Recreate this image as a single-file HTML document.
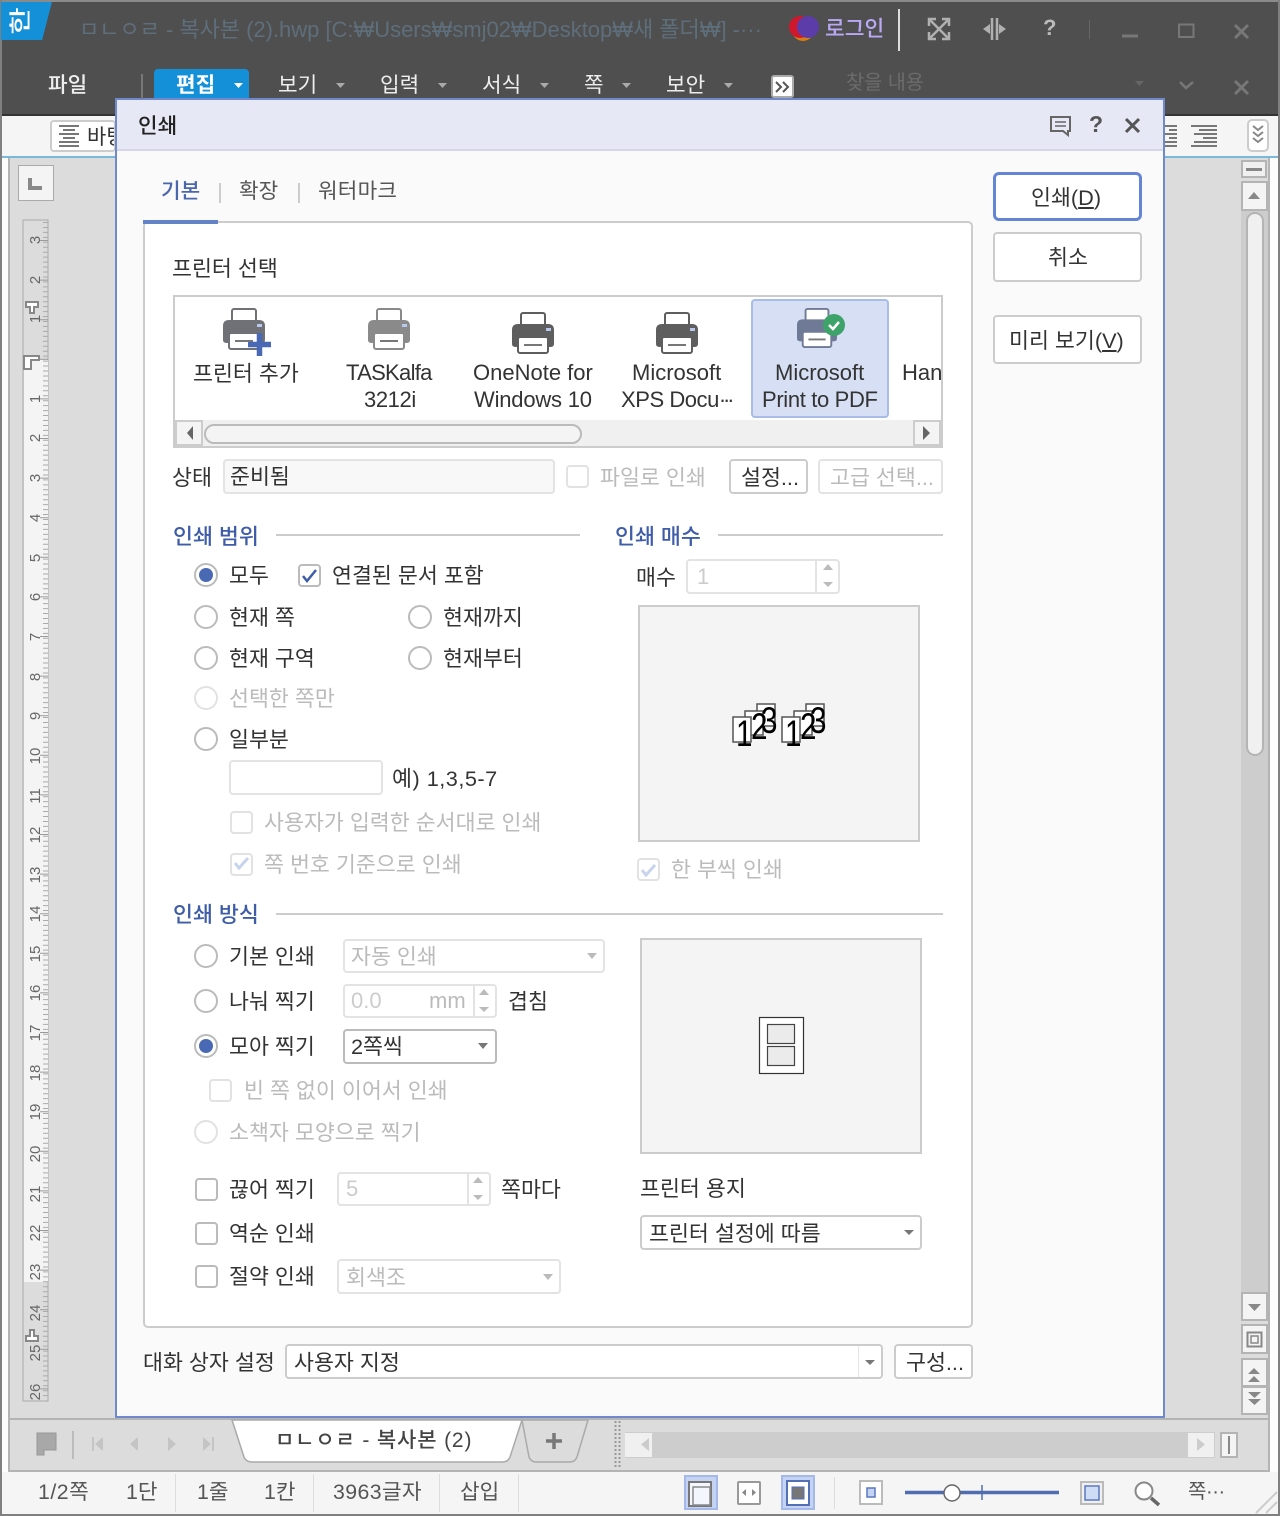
<!DOCTYPE html>
<html lang="ko"><head><meta charset="utf-8"><title>인쇄</title>
<style>
html,body{margin:0;padding:0;background:#fff}
#p{position:relative;width:1280px;height:1516px;overflow:hidden;background:#dcdcdc;font-family:"Liberation Sans","Noto Sans CJK KR",sans-serif;font-size:21.7px;color:#333}
#p div,#p span.t{position:absolute;box-sizing:border-box}
.t{white-space:nowrap;line-height:0;z-index:5;color:#333;margin-top:4px}
#p span.n{margin-top:0;font-size:22px}
.d{color:#bbb}
.h{color:#3f5ca8;font-weight:500}
.w{background:#fff;border:2px solid #ccc;border-radius:4px}
.x{background:#fafafa;border:2px solid #e3e3e3;border-radius:4px}
.r{width:24px;height:24px;border-radius:50%;border:2px solid #bbb;background:#fff}
.rd{border-color:#e2e2e2}
.rs:after{content:"";position:absolute;left:3px;top:3px;width:14px;height:14px;border-radius:50%;background:#4a69b4}
.c{width:23px;height:23px;border-radius:4px;border:2px solid #bbb;background:#fff}
.cd{border-color:#e2e2e2}
.l{background:#ccc;height:2px}
#o{position:absolute;left:0;top:0;z-index:2}
</style></head><body><div id="p">

<!-- window chrome -->
<div style="left:0;top:0;width:1280px;height:116px;background:#4f4f4f"></div>
<div style="left:0;top:0;width:1280px;height:2px;background:#8a8a8a"></div>
<div style="left:0;top:114px;width:1280px;height:2px;background:#333"></div>
<div style="left:0;top:116px;width:1280px;height:40px;background:#f5f5f5"></div>
<div style="left:0;top:156px;width:1280px;height:2px;background:#7db8dc"></div>
<div style="left:0;top:0;width:2px;height:1516px;background:#808080"></div>
<div style="left:1278px;top:0;width:2px;height:1516px;background:#808080"></div>
<div style="left:2px;top:158px;width:6px;height:1314px;background:#fdfdfd"></div>
<div style="left:8px;top:158px;width:2px;height:1314px;background:#b4b4b4"></div>
<div style="left:1270px;top:158px;width:8px;height:1314px;background:#fdfdfd"></div>
<div style="left:1268px;top:158px;width:2px;height:1314px;background:#b4b4b4"></div>

<span class="t" style="left:11px;top:17px;color:#fff;font-size:22px;transform:rotate(-90deg) scaleX(1.35);font-weight:500">한</span>
<span class="t" style="left:79px;top:26px;color:#5e6e7b;font-size:22px;letter-spacing:-.02px">ㅁㄴㅇㄹ - 복사본 (2).hwp [C:₩Users₩smj02₩Desktop₩새 폴더₩] -···</span>
<span class="t" style="left:825px;top:25px;color:#bba8f5;font-size:21.5px;font-weight:500">로그인</span>
<span class="t n" style="left:1043px;top:28px;color:#bbb;font-weight:700">?</span>

<span class="t" style="left:48px;top:81px;color:#eee;font-size:21.3px;font-weight:500">파일</span>
<div style="left:154px;top:69px;width:95px;height:30px;background:#1490d8;border-radius:4px 4px 0 0"></div>
<span class="t" style="left:176px;top:81px;color:#fff;font-size:21.3px;font-weight:700">편집</span>
<span class="t" style="left:278px;top:81px;color:#eee;font-size:21.3px">보기</span>
<span class="t" style="left:380px;top:81px;color:#eee;font-size:21.3px">입력</span>
<span class="t" style="left:482px;top:81px;color:#eee;font-size:21.3px">서식</span>
<span class="t" style="left:584px;top:81px;color:#eee;font-size:21.3px">쪽</span>
<span class="t" style="left:666px;top:81px;color:#eee;font-size:21.3px">보안</span>
<span class="t" style="left:846px;top:79px;color:#6c6c6c;font-size:19.7px">찾을 내용</span>
<div style="left:771px;top:75px;width:23px;height:23px;background:#fff;border:2px solid #aaa;border-radius:3px"></div>

<div style="left:50px;top:120px;width:66px;height:32px;background:#fff;border:2px solid #ccc;border-radius:4px;overflow:hidden"><span class="t" style="left:35px;top:12px;font-size:21px">바탕</span></div>
<div style="left:1247px;top:119px;width:22px;height:33px;background:#fff;border:2px solid #ccc;border-radius:5px"></div>

<!-- left ruler -->
<div style="left:18px;top:165px;width:36px;height:36px;background:#f4f4f4;border:1px solid #aaa"></div>

<!-- right scrollbar -->
<div style="left:1241px;top:160px;width:26px;height:18px;background:#f0f0f0;border:2px solid #b4b4b4"></div>
<div style="left:1241px;top:181px;width:27px;height:1135px;background:#cdcdcd"></div>
<div style="left:1241px;top:181px;width:27px;height:30px;background:#f4f4f4;border:2px solid #b4b4b4"></div>
<div style="left:1246px;top:212px;width:18px;height:544px;background:#f0f0f0;border:2px solid #b4b4b4;border-radius:9px"></div>
<div style="left:1241px;top:1292px;width:27px;height:29px;background:#f4f4f4;border:2px solid #b4b4b4"></div>
<div style="left:1241px;top:1324px;width:27px;height:30px;background:#f4f4f4;border:2px solid #b4b4b4"></div>
<div style="left:1241px;top:1358px;width:27px;height:29px;background:#f4f4f4;border:2px solid #b4b4b4"></div>
<div style="left:1241px;top:1386px;width:27px;height:29px;background:#f4f4f4;border:2px solid #b4b4b4"></div>

<!-- tab bar -->
<div style="left:8px;top:1418px;width:1262px;height:2px;background:#b4b4b4"></div>
<div style="left:8px;top:1470px;width:1262px;height:2px;background:#b4b4b4"></div>
<div style="left:625px;top:1432px;width:590px;height:26px;background:#cdcdcd"></div>
<div style="left:625px;top:1433px;width:27px;height:24px;background:#f0f0f0"></div>
<div style="left:1188px;top:1433px;width:26px;height:24px;background:#f0f0f0"></div>
<div style="left:1220px;top:1432px;width:18px;height:26px;background:#f4f4f4;border:2px solid #b4b4b4"></div>
<span class="t" style="left:275px;top:1437px;font-size:21px;color:#444;font-weight:500;letter-spacing:.85px">ㅁㄴㅇㄹ - 복사본 (2)</span>

<!-- status bar -->
<div style="left:2px;top:1472px;width:1276px;height:42px;background:#f5f5f5"></div>
<div style="left:0;top:1514px;width:1280px;height:2px;background:#808080"></div>
<span class="t" style="left:38px;top:1488px;color:#555;font-size:21.3px;letter-spacing:.5px">1/2쪽</span>
<span class="t" style="left:126px;top:1488px;color:#555;font-size:21.3px">1단</span>
<span class="t" style="left:197px;top:1488px;color:#555;font-size:21.3px">1줄</span>
<span class="t" style="left:264px;top:1488px;color:#555;font-size:21.3px">1칸</span>
<span class="t" style="left:333px;top:1488px;color:#555;font-size:21.3px;letter-spacing:.4px">3963글자</span>
<span class="t" style="left:460px;top:1488px;color:#555;font-size:21.3px">삽입</span>
<span class="t" style="left:1188px;top:1488px;color:#555;font-size:20px;letter-spacing:-.4px">쪽···</span>
<div style="left:175px;top:1474px;width:1px;height:38px;background:#ddd"></div>
<div style="left:313px;top:1474px;width:1px;height:38px;background:#ddd"></div>
<div style="left:439px;top:1474px;width:1px;height:38px;background:#ddd"></div>
<div style="left:518px;top:1474px;width:1px;height:38px;background:#ddd"></div>
<div style="left:834px;top:1477px;width:1px;height:32px;background:#ddd"></div>
<div style="left:684px;top:1475px;width:34px;height:35px;background:#c5d3f2;border:2px solid #a4b8ea"></div>
<div style="left:781px;top:1475px;width:34px;height:35px;background:#c5d3f2;border:2px solid #a4b8ea"></div>

<!-- dialog -->
<div style="left:115px;top:98px;width:1050px;height:1320px;background:#fafafa;border:2px solid #7088cc"></div>
<div style="left:117px;top:100px;width:1046px;height:49px;background:#e6e8f5"></div>
<div style="left:117px;top:149px;width:1046px;height:2px;background:#d4d7ea"></div>
<span class="t" style="left:138px;top:122px;font-size:21.3px;font-weight:500;color:#222">인쇄</span>

<span class="t" style="left:161px;top:187px;color:#4a66ad;font-weight:500;font-size:21.3px">기본</span>
<span class="t" style="left:239px;top:187px;color:#555;font-size:21.3px">확장</span>
<span class="t" style="left:318px;top:187px;color:#555;font-size:21.3px;letter-spacing:.2px">워터마크</span>
<div style="left:219px;top:183px;width:2px;height:20px;background:#ccc"></div>
<div style="left:298px;top:183px;width:2px;height:20px;background:#ccc"></div>

<div style="left:143px;top:221px;width:830px;height:1107px;background:#fff;border:2px solid #ccc;border-radius:5px"></div>
<div style="left:143px;top:220px;width:75px;height:4px;background:#6482c8"></div>

<span class="t" style="left:172px;top:265px">프린터 선택</span>

<!-- printer list -->
<div style="left:173px;top:295px;width:770px;height:153px;background:#fff;border:2px solid #ccc;overflow:hidden">
  <div style="left:576px;top:2px;width:138px;height:119px;background:#d6dff3;border:2px solid #a8bce8;border-radius:4px"></div>
  <span class="t n" style="left:727px;top:76px">Han</span>
  <div style="left:0;top:123px;width:766px;height:26px;background:#f0f0f0"></div>
  <div style="left:0;top:123px;width:28px;height:26px;background:#f4f4f4;border:2px solid #ccc"></div>
  <div style="left:738px;top:123px;width:28px;height:26px;background:#f4f4f4;border:2px solid #ccc"></div>
  <div style="left:29px;top:127px;width:378px;height:20px;background:#f4f4f4;border:2px solid #bbb;border-radius:10px"></div>
</div>
<span class="t" style="left:193px;top:370px">프린터 추가</span>
<span class="t n" style="left:346px;top:373px;letter-spacing:-.7px">TASKalfa</span>
<span class="t n" style="left:364px;top:400px;letter-spacing:-.4px">3212i</span>
<span class="t n" style="left:473px;top:373px">OneNote for</span>
<span class="t n" style="left:474px;top:400px;letter-spacing:-.2px">Windows 10</span>
<span class="t n" style="left:632px;top:373px">Microsoft</span>
<span class="t n" style="left:621px;top:400px;letter-spacing:-.45px">XPS Docu<span style="letter-spacing:-3.200px">···</span></span>
<span class="t n" style="left:775px;top:373px">Microsoft</span>
<span class="t n" style="left:762px;top:400px;letter-spacing:-.35px">Print to PDF</span>

<span class="t" style="left:172px;top:474px">상태</span>
<div class="x" style="left:223px;top:459px;width:332px;height:35px;background:#f8f8f8"></div>
<span class="t" style="left:230px;top:473px">준비됨</span>
<div class="c cd" style="left:566px;top:465px"></div>
<span class="t d" style="left:600px;top:474px">파일로 인쇄</span>
<div class="w" style="left:729px;top:459px;width:79px;height:35px"></div>
<span class="t" style="left:741px;top:474px">설정...</span>
<div class="x" style="left:818px;top:459px;width:125px;height:35px;background:#fff"></div>
<span class="t d" style="left:830px;top:474px">고급 선택...</span>

<!-- range -->
<span class="t h" style="left:173px;top:533px">인쇄 범위</span><div class="l" style="left:276px;top:534px;width:304px"></div>
<span class="t h" style="left:615px;top:533px">인쇄 매수</span><div class="l" style="left:718px;top:534px;width:225px"></div>

<div class="r rs" style="left:194px;top:563px"></div><span class="t" style="left:229px;top:572px">모두</span>
<div class="c" style="left:298px;top:564px"></div><span class="t" style="left:332px;top:572px">연결된 문서 포함</span>
<div class="r" style="left:194px;top:605px"></div><span class="t" style="left:229px;top:614px">현재 쪽</span>
<div class="r" style="left:408px;top:605px"></div><span class="t" style="left:443px;top:614px">현재까지</span>
<div class="r" style="left:194px;top:646px"></div><span class="t" style="left:229px;top:655px">현재 구역</span>
<div class="r" style="left:408px;top:646px"></div><span class="t" style="left:443px;top:655px">현재부터</span>
<div class="r rd" style="left:194px;top:686px"></div><span class="t d" style="left:229px;top:695px">선택한 쪽만</span>
<div class="r" style="left:194px;top:727px"></div><span class="t" style="left:229px;top:736px">일부분</span>
<div class="x" style="left:229px;top:760px;width:154px;height:35px;background:#fff"></div>
<span class="t" style="left:392px;top:775px;letter-spacing:.5px">예) 1,3,5-7</span>
<div class="c cd" style="left:230px;top:811px"></div><span class="t d" style="left:264px;top:819px">사용자가 입력한 순서대로 인쇄</span>
<div class="c cd" style="left:230px;top:853px"></div><span class="t d" style="left:264px;top:861px">쪽 번호 기준으로 인쇄</span>

<span class="t" style="left:636px;top:574px">매수</span>
<div class="x" style="left:686px;top:559px;width:154px;height:35px;background:#fff"></div>
<div style="left:815px;top:561px;width:2px;height:31px;background:#e3e3e3"></div>
<span class="t n" style="left:697px;top:577px;color:#ccc">1</span>
<div style="left:638px;top:605px;width:282px;height:237px;background:#f4f4f4;border:2px solid #ccc"></div>
<div class="c cd" style="left:637px;top:858px"></div><span class="t d" style="left:671px;top:866px">한 부씩 인쇄</span>

<!-- method -->
<span class="t h" style="left:173px;top:911px">인쇄 방식</span><div class="l" style="left:276px;top:913px;width:667px"></div>

<div class="r" style="left:194px;top:944px"></div><span class="t" style="left:229px;top:953px">기본 인쇄</span>
<div class="x" style="left:343px;top:939px;width:262px;height:34px;background:#fff"></div><span class="t d" style="left:351px;top:953px">자동 인쇄</span>
<div class="r" style="left:194px;top:989px"></div><span class="t" style="left:229px;top:998px">나눠 찍기</span>
<div class="x" style="left:343px;top:984px;width:154px;height:34px;background:#fff"></div>
<div style="left:473px;top:986px;width:2px;height:30px;background:#e3e3e3"></div>
<span class="t n" style="left:351px;top:1001px;color:#ccc">0.0</span><span class="t d n" style="left:429px;top:1001px">mm</span>
<span class="t" style="left:508px;top:998px">겹침</span>
<div class="r rs" style="left:194px;top:1034px"></div><span class="t" style="left:229px;top:1043px">모아 찍기</span>
<div class="w" style="left:343px;top:1029px;width:154px;height:35px;border-color:#bbb"></div><span class="t" style="left:351px;top:1043px">2쪽씩</span>
<div class="c cd" style="left:209px;top:1079px"></div><span class="t d" style="left:244px;top:1087px">빈 쪽 없이 이어서 인쇄</span>
<div class="r rd" style="left:194px;top:1120px"></div><span class="t d" style="left:229px;top:1129px">소책자 모양으로 찍기</span>

<div class="c" style="left:195px;top:1178px"></div><span class="t" style="left:229px;top:1186px">끊어 찍기</span>
<div class="x" style="left:337px;top:1172px;width:154px;height:34px;background:#fff"></div>
<div style="left:467px;top:1174px;width:2px;height:30px;background:#e3e3e3"></div>
<span class="t n" style="left:346px;top:1189px;color:#ccc">5</span>
<span class="t" style="left:501px;top:1186px">쪽마다</span>
<div class="c" style="left:195px;top:1222px"></div><span class="t" style="left:229px;top:1230px">역순 인쇄</span>
<div class="c" style="left:195px;top:1265px"></div><span class="t" style="left:229px;top:1273px">절약 인쇄</span>
<div class="x" style="left:337px;top:1259px;width:224px;height:35px;background:#fff"></div><span class="t d" style="left:346px;top:1274px">회색조</span>

<div style="left:640px;top:938px;width:282px;height:216px;background:#f4f4f4;border:2px solid #ccc"></div>
<span class="t" style="left:640px;top:1185px">프린터 용지</span>
<div class="w" style="left:640px;top:1215px;width:282px;height:35px"></div><span class="t" style="left:649px;top:1230px">프린터 설정에 따름</span>

<span class="t" style="left:143px;top:1359px">대화 상자 설정</span>
<div class="w" style="left:285px;top:1344px;width:598px;height:35px"></div>
<div style="left:858px;top:1346px;width:1px;height:31px;background:#e3e3e3"></div>
<span class="t" style="left:294px;top:1359px">사용자 지정</span>
<div class="w" style="left:894px;top:1344px;width:79px;height:35px"></div><span class="t" style="left:906px;top:1359px">구성...</span>

<div style="left:993px;top:172px;width:149px;height:49px;background:#fff;border:3px solid #6484d4;border-radius:6px"></div>
<span class="t" style="left:1031px;top:194px">인쇄(<u>D</u>)</span>
<div class="w" style="left:993px;top:232px;width:149px;height:50px"></div><span class="t" style="left:1048px;top:254px">취소</span>
<div class="w" style="left:993px;top:315px;width:149px;height:49px"></div><span class="t" style="left:1009px;top:337px">미리 보기(<u>V</u>)</span>

<svg id="o" width="1280" height="1516" viewBox="0 0 1280 1516" xmlns="http://www.w3.org/2000/svg">
<defs>
<symbol id="pr" viewBox="0 0 42 42" overflow="visible">
 <rect x="9" y="1" width="24" height="16" rx="2" fill="#fff" stroke="currentColor" stroke-width="2"/>
 <path d="M6 12H36Q42 12 42 18V32Q42 35 38 35H4Q0 35 0 32V18Q0 12 6 12Z" fill="currentColor"/>
 <rect x="34" y="16" width="5" height="3" fill="#b8c8ee"/>
 <rect x="6" y="25" width="30" height="16" rx="2" fill="#fff" stroke="currentColor" stroke-width="2"/>
 <path d="M12 33H30" stroke="#777" stroke-width="2"/>
</symbol>
</defs>

<!-- logo -->
<path d="M2 2H54L44 40Q43 40 38 40H2Z" transform="translate(-1 0) scale(.98 1)" fill="#1490d8"/>
<circle cx="803" cy="30" r="11" fill="#e8820c" opacity=".9"/>
<circle cx="800" cy="27" r="11" fill="#d0182c"/>
<circle cx="808" cy="27" r="11" fill="#5c3ca8"/>
<rect x="898" y="9" width="2" height="42" fill="#ddd"/>

<!-- top icons -->
<g fill="none" stroke="#b0b0b0" stroke-width="2.5">
 <path d="M930 20 948 38M948 20 930 38M929 26V19H936M942 19H949V26M929 32V39H936M942 39H949V32"/>
 <path d="M992 18V40M997 18V40"/>
</g>
<path d="M983 29l7-5v10zM1006 29l-7-5v10z" fill="#b0b0b0"/>
<rect x="1089" y="20" width="1" height="19" fill="#666"/>
<g fill="none" stroke="#777" stroke-width="3">
 <path d="M1122 36H1138"/>
 <path d="M1179 24.500H1193.500V37H1179Z" stroke-width="2"/>
 <path d="M1235 25 1248 38M1248 25 1235 38"/>
 <path d="M1235 81 1248 94M1248 81 1235 94"/>
 <path d="M1180 82 1186 88 1193 82" stroke-width="2.500"/>
</g>
<rect x="141" y="74" width="2" height="25" fill="#777"/>
<path d="M234 83h9l-4.500 5z" fill="#fff"/>
<g fill="#aaa"><path d="M336 83h9l-4.500 5zM438 83h9l-4.500 5zM540 83h9l-4.500 5zM622 83h9l-4.500 5zM724 83h9l-4.500 5z"/></g>
<path d="M1135 81h9l-4.500 5z" fill="#666"/>
<path d="M776 82l5 5-5 5M783 82l5 5-5 5" fill="none" stroke="#555" stroke-width="2"/>

<!-- toolbar icons -->
<g stroke="#777" stroke-width="2">
 <path d="M59 126H79M63 130H75M59 134H79M63 138H75M59 142H79M59 146H79"/>
 <path d="M1165 126H1177M1169 130H1177M1165 134H1177M1169 138H1177M1165 142H1177M1165 146H1177"/>
 <path d="M1191 126H1217M1199 130H1217M1194 134H1217M1203 138H1217M1194 142H1217M1191 146H1217"/>
</g>
<path d="M1253 126l5 4 5-4M1253 132l5 4 5-4M1253 138l5 4 5-4" fill="none" stroke="#888" stroke-width="2"/>

<!-- L corner -->
<path d="M30 178v10h12" fill="none" stroke="#888" stroke-width="4"/>

<!-- ruler -->
<rect x="23" y="220" width="25" height="1181" fill="#dcdcdc" stroke="#aaa" stroke-width="1"/>
<rect x="24" y="360" width="24" height="922" fill="#f4f4f4"/>
<path d="M45.500 222V1400" stroke="#aaa" stroke-width="5" stroke-dasharray="1 3.950" fill="none"/>
<path d="M44 240V1400" stroke="#999" stroke-width="8" stroke-dasharray="1 38.600" fill="none"/>
<g font-family="Liberation Sans,sans-serif" font-size="15" fill="#666" text-anchor="middle">
<text transform="translate(40 240) rotate(-90)">3</text>
<text transform="translate(40 280) rotate(-90)">2</text>
<text transform="translate(40 319) rotate(-90)">1</text>
<text transform="translate(40 399) rotate(-90)">1</text>
<text transform="translate(40 438) rotate(-90)">2</text>
<text transform="translate(40 478) rotate(-90)">3</text>
<text transform="translate(40 518) rotate(-90)">4</text>
<text transform="translate(40 558) rotate(-90)">5</text>
<text transform="translate(40 597) rotate(-90)">6</text>
<text transform="translate(40 637) rotate(-90)">7</text>
<text transform="translate(40 677) rotate(-90)">8</text>
<text transform="translate(40 716) rotate(-90)">9</text>
<text transform="translate(40 756) rotate(-90)">10</text>
<text transform="translate(40 796) rotate(-90)">11</text>
<text transform="translate(40 835) rotate(-90)">12</text>
<text transform="translate(40 875) rotate(-90)">13</text>
<text transform="translate(40 914) rotate(-90)">14</text>
<text transform="translate(40 954) rotate(-90)">15</text>
<text transform="translate(40 993) rotate(-90)">16</text>
<text transform="translate(40 1033) rotate(-90)">17</text>
<text transform="translate(40 1073) rotate(-90)">18</text>
<text transform="translate(40 1112) rotate(-90)">19</text>
<text transform="translate(40 1154) rotate(-90)">20</text>
<text transform="translate(40 1194) rotate(-90)">21</text>
<text transform="translate(40 1233) rotate(-90)">22</text>
<text transform="translate(40 1272) rotate(-90)">23</text>
<text transform="translate(40 1313) rotate(-90)">24</text>
<text transform="translate(40 1353) rotate(-90)">25</text>
<text transform="translate(40 1392) rotate(-90)">26</text>
</g>
<path d="M26 302H38V307H34V313H30V307H26Z" fill="#fff" stroke="#888" stroke-width="2"/>
<path d="M24 356H39V360H31V369H24Z" fill="#fff" stroke="#888" stroke-width="2"/>
<path d="M26 1341H38V1336H34V1330H30V1336H26Z" fill="#fff" stroke="#888" stroke-width="2"/>

<!-- right scrollbar icons -->
<rect x="1246" y="168" width="16" height="3" fill="#888"/>
<path d="M1248 199l6-7 6 7zM1248 1304h13l-6.500 7zM1248 1374l6-6 6 6zM1248 1382l6-6 6 6zM1248 1392h13l-6.500 6zM1248 1399h13l-6.500 6z" fill="#888"/>
<rect x="1247.500" y="1332.500" width="14" height="14" fill="none" stroke="#888" stroke-width="2"/>
<rect x="1251" y="1336" width="7" height="7" fill="none" stroke="#888" stroke-width="1.500"/>

<!-- tab bar -->
<path d="M37 1433H56V1450H44V1455H37Z" fill="#a8a8a8" stroke="#999"/>
<rect x="72" y="1431" width="2" height="28" fill="#bbb"/>
<g fill="#c4c4c4">
 <path d="M92 1437h2v14h-2zM103 1437v14l-8-7zM138 1437v14l-8-7zM168 1437v14l8-7zM203 1437v14l8-7zM212 1437h2v14h-2z"/>
</g>
<path d="M232 1420H522L510 1457Q508 1462 502 1462H252Q246 1462 244 1457Z" fill="#fff" stroke="#aaa" stroke-width="1.500"/>
<path d="M522 1420H588L577 1457Q575 1462 570 1462H536Q531 1462 529 1457Z" fill="#dcdcdc" stroke="#aaa" stroke-width="1.500"/>
<path d="M554 1433V1449M546 1441H562" stroke="#777" stroke-width="3.500"/>
<path d="M615.500 1421V1468M619.500 1421V1468" stroke="#999" stroke-width="2" stroke-dasharray="2 2"/>
<path d="M649 1438v13l-8-6.500zM1197 1438v13l8-6.500z" fill="#ccc"/>
<rect x="1228" y="1436" width="2" height="18" fill="#888"/>

<!-- status icons -->
<rect x="689" y="1482" width="22" height="24" fill="#f4f6fd" stroke="#777" stroke-width="2"/>
<rect x="693" y="1487" width="17" height="18" fill="#f4f6fd" stroke="#888" stroke-width="1.500"/>
<rect x="738" y="1482" width="22" height="22" rx="1" fill="#fff" stroke="#999" stroke-width="2"/>
<path d="M746 1489v7l-4-3.500zM752 1489v7l4-3.500z" fill="#888"/>
<rect x="787" y="1481" width="22" height="24" fill="#fff" stroke="#5370b4" stroke-width="2"/>
<rect x="792" y="1487" width="12" height="12" fill="#777" stroke="#5370b4"/>
<rect x="860" y="1481" width="22" height="23" fill="#fff" stroke="#bbb" stroke-width="2"/>
<rect x="867" y="1488" width="8" height="9" fill="#c5d3f2" stroke="#5a78c0" stroke-width="1.500"/>
<path d="M905 1492.500H1059" stroke="#4f6db0" stroke-width="3.500"/>
<path d="M982 1485V1500" stroke="#4f6db0" stroke-width="1.500"/>
<circle cx="952" cy="1493" r="8" fill="#fff" stroke="#666" stroke-width="1.500"/>
<rect x="1081" y="1482" width="22" height="22" fill="#f0f0f0" stroke="#bbb" stroke-width="2"/>
<rect x="1085" y="1486" width="14" height="14" fill="#cfdcf6" stroke="#5a78c0" stroke-width="1.500"/>
<circle cx="1144" cy="1491" r="8.500" fill="#fff" stroke="#888" stroke-width="2"/>
<path d="M1151 1498l8 7" stroke="#666" stroke-width="3.500"/>
<path d="M1256 1513L1277 1492M1266 1513L1277 1502" stroke="#ccc" stroke-width="2"/>

<!-- dialog header icons -->
<path d="M1051 117H1070V131H1068V135L1063 131H1051Z" fill="none" stroke="#666" stroke-width="2"/>
<path d="M1055 122H1066M1055 126H1066" stroke="#666" stroke-width="1.500"/>
<text x="1096" y="132" text-anchor="middle" font-family="Liberation Sans,sans-serif" font-size="23" font-weight="700" fill="#555">?</text>
<path d="M1126 119 1139 132M1139 119 1126 132" stroke="#555" stroke-width="3"/>

<!-- printers -->
<use href="#pr" x="223" y="308" width="42" height="42" style="color:#6f7176"/>
<path d="M259.500 333V356M248 344.500H271" stroke="#4a69b4" stroke-width="5.500"/>
<use href="#pr" x="368" y="308" width="42" height="42" style="color:#8a8a8a"/>
<use href="#pr" x="512" y="312" width="42" height="42" style="color:#5e5e5e"/>
<use href="#pr" x="656" y="312" width="42" height="42" style="color:#5e5e5e"/>
<use href="#pr" x="797" y="308" width="40" height="40" style="color:#6f7a96"/>
<circle cx="834" cy="325" r="11" fill="#3ea36a"/>
<path d="M829 325l4 4 6-7" fill="none" stroke="#fff" stroke-width="2.500"/>
<path d="M193 426v14l-6-7zM923 426v14l7-7z" fill="#666"/>

<!-- checks -->
<path d="M303 576l4 5 9-11" fill="none" stroke="#3f5ca8" stroke-width="2.500"/>
<path d="M235 863l4 5 9-10" fill="none" stroke="#c8d3ec" stroke-width="3"/>
<path d="M642 870l4 5 9-10" fill="none" stroke="#c8d3ec" stroke-width="3"/>

<!-- spin / select arrows -->
<g fill="#bbb">
 <path d="M823 570l5-6 5 6zM823 582h10l-5 5zM479 995l5-6 5 6zM479 1007h10l-5 5zM473 1183l5-6 5 6zM473 1195h10l-5 5z"/>
 <path d="M587 953h10l-5 6zM543 1274h10l-5 6z"/>
</g>
<path d="M478 1043h10l-5 6zM904 1230h10l-5 5zM865 1360h10l-5 5z" fill="#777"/>

<!-- preview 1 -->
<g transform="translate(733 703)">
 <rect x="24" y="1" width="18" height="22" fill="#fff" stroke="#555" stroke-width="1.500"/>
 <rect x="12" y="8" width="18" height="24" fill="#fff" stroke="#555" stroke-width="1.500"/>
 <rect x="0" y="14" width="18" height="25" fill="#fff" stroke="#555" stroke-width="1.500"/>
 <g font-family="Liberation Sans,sans-serif" font-size="37" fill="#000">
  <text transform="translate(28 30) scale(.8 1)">3</text><text transform="translate(18 36) scale(.8 1)">2</text><text transform="translate(3 43) scale(.8 1)">1</text>
 </g>
</g>
<g transform="translate(782 703)">
 <rect x="24" y="1" width="18" height="22" fill="#fff" stroke="#555" stroke-width="1.500"/>
 <rect x="12" y="8" width="18" height="24" fill="#fff" stroke="#555" stroke-width="1.500"/>
 <rect x="0" y="14" width="18" height="25" fill="#fff" stroke="#555" stroke-width="1.500"/>
 <g font-family="Liberation Sans,sans-serif" font-size="37" fill="#000">
  <text transform="translate(28 30) scale(.8 1)">3</text><text transform="translate(18 36) scale(.8 1)">2</text><text transform="translate(3 43) scale(.8 1)">1</text>
 </g>
</g>

<!-- preview 2 -->
<rect x="759.500" y="1017.500" width="44" height="56" fill="#fff" stroke="#333" stroke-width="1.200"/>
<rect x="767.500" y="1024.500" width="27" height="19" fill="#ebebeb" stroke="#444" stroke-width="1.200"/>
<rect x="767.500" y="1046.500" width="27" height="19" fill="#ebebeb" stroke="#444" stroke-width="1.200"/>
</svg>
</div></body></html>
